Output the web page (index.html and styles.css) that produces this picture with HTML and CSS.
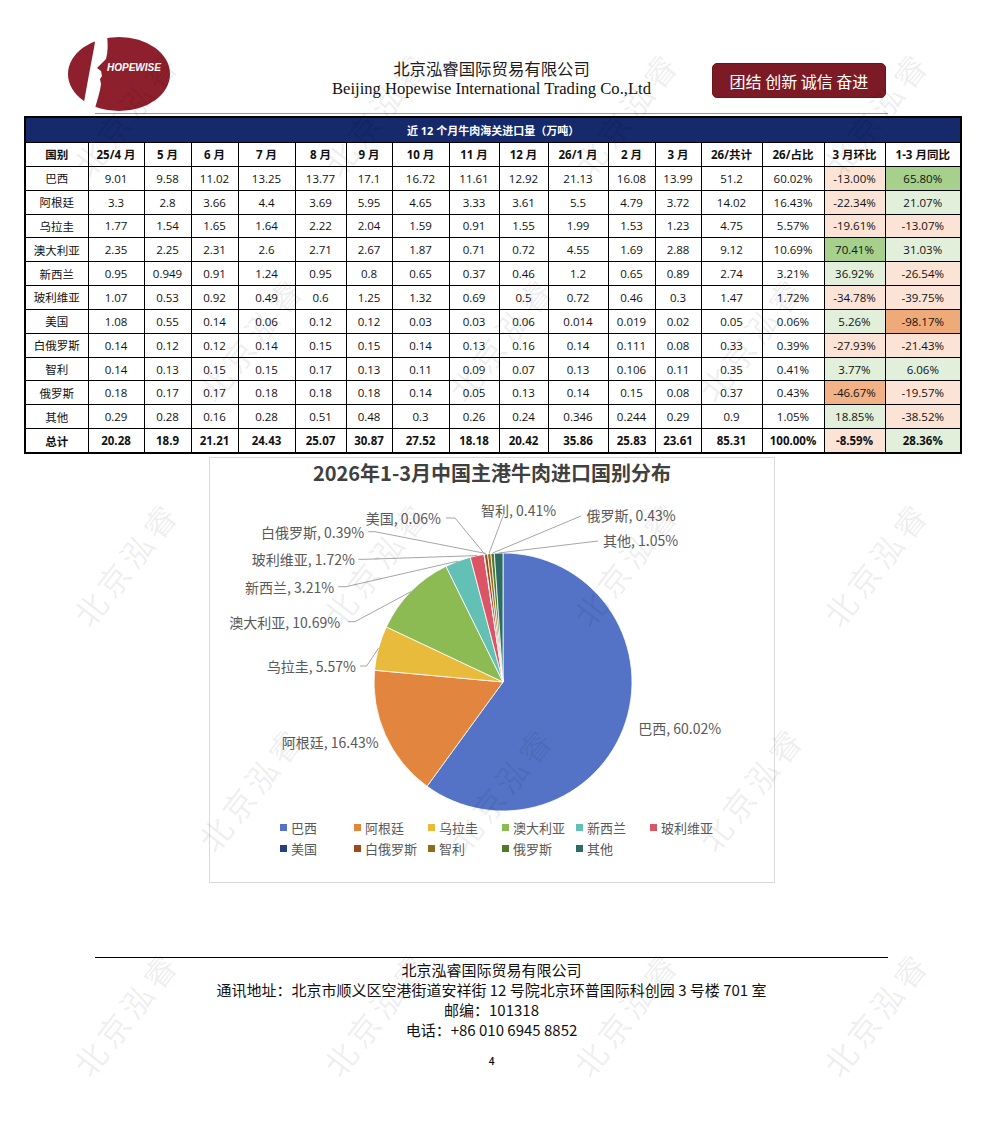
FILE: index.html
```html
<!DOCTYPE html>
<html lang="zh-CN">
<head>
<meta charset="utf-8">
<title>近12个月牛肉海关进口量</title>
<link rel="stylesheet" href="styles.css">
</head>
<body>
<div class="page">
  <header class="hdr">
    <div class="logo">
      <svg width="120" height="82" viewBox="0 0 120 82">
        <ellipse cx="57" cy="40" rx="51" ry="37" class="logo-red"/>
        <path class="logo-red" d="M58,4 L70,6 L61,9 Z"/>
        <path fill="#fff" d="M34,1 L45,1 C46,10 46,18 44,25 L35,34 L39,37 L40,42 L38,45 L39,50 C38,58 35,68 31,80 L20,80 C23,62 27,40 32,14 Z"/>
        <text x="45" y="37" class="logo-txt">HOPEWISE</text>
      </svg>
    </div>
    <div class="co">
      <div class="co-cn">北京泓睿国际贸易有限公司</div>
      <div class="co-en">Beijing Hopewise International Trading Co.,Ltd</div>
    </div>
    <div class="motto">团结 创新 诚信 奋进</div>
  </header>
  <div class="rule-top"></div>

  <table class="data">
    <colgroup>
      <col class="w63"><col class="w56"><col class="w47"><col class="w47"><col class="w57"><col class="w51"><col class="w46"><col class="w57"><col class="w50"><col class="w49"><col class="w60"><col class="w47"><col class="w46"><col class="w61"><col class="w62"><col class="w61"><col class="w76">
    </colgroup>
    <tr><td class="ttl" colspan="17">近 12 个月牛肉海关进口量（万吨）</td></tr>
    <tr class="hd"><th>国别</th><th>25/4 月</th><th>5 月</th><th>6 月</th><th>7 月</th><th>8 月</th><th>9 月</th><th>10 月</th><th>11 月</th><th>12 月</th><th>26/1 月</th><th>2 月</th><th>3 月</th><th>26/共计</th><th>26/占比</th><th>3 月环比</th><th>1-3 月同比</th></tr>
    <tr><td>巴西</td><td>9.01</td><td>9.58</td><td>11.02</td><td>13.25</td><td>13.77</td><td>17.1</td><td>16.72</td><td>11.61</td><td>12.92</td><td>21.13</td><td>16.08</td><td>13.99</td><td>51.2</td><td>60.02%</td><td class="neg">-13.00%</td><td class="hi">65.80%</td></tr>
    <tr><td>阿根廷</td><td>3.3</td><td>2.8</td><td>3.66</td><td>4.4</td><td>3.69</td><td>5.95</td><td>4.65</td><td>3.33</td><td>3.61</td><td>5.5</td><td>4.79</td><td>3.72</td><td>14.02</td><td>16.43%</td><td class="neg">-22.34%</td><td class="pos">21.07%</td></tr>
    <tr><td>乌拉圭</td><td>1.77</td><td>1.54</td><td>1.65</td><td>1.64</td><td>2.22</td><td>2.04</td><td>1.59</td><td>0.91</td><td>1.55</td><td>1.99</td><td>1.53</td><td>1.23</td><td>4.75</td><td>5.57%</td><td class="neg">-19.61%</td><td class="neg">-13.07%</td></tr>
    <tr><td>澳大利亚</td><td>2.35</td><td>2.25</td><td>2.31</td><td>2.6</td><td>2.71</td><td>2.67</td><td>1.87</td><td>0.71</td><td>0.72</td><td>4.55</td><td>1.69</td><td>2.88</td><td>9.12</td><td>10.69%</td><td class="hi">70.41%</td><td class="pos">31.03%</td></tr>
    <tr><td>新西兰</td><td>0.95</td><td>0.949</td><td>0.91</td><td>1.24</td><td>0.95</td><td>0.8</td><td>0.65</td><td>0.37</td><td>0.46</td><td>1.2</td><td>0.65</td><td>0.89</td><td>2.74</td><td>3.21%</td><td class="pos">36.92%</td><td class="neg">-26.54%</td></tr>
    <tr><td>玻利维亚</td><td>1.07</td><td>0.53</td><td>0.92</td><td>0.49</td><td>0.6</td><td>1.25</td><td>1.32</td><td>0.69</td><td>0.5</td><td>0.72</td><td>0.46</td><td>0.3</td><td>1.47</td><td>1.72%</td><td class="neg">-34.78%</td><td class="neg">-39.75%</td></tr>
    <tr><td>美国</td><td>1.08</td><td>0.55</td><td>0.14</td><td>0.06</td><td>0.12</td><td>0.12</td><td>0.03</td><td>0.03</td><td>0.06</td><td>0.014</td><td>0.019</td><td>0.02</td><td>0.05</td><td>0.06%</td><td class="pos">5.26%</td><td class="lo2">-98.17%</td></tr>
    <tr><td>白俄罗斯</td><td>0.14</td><td>0.12</td><td>0.12</td><td>0.14</td><td>0.15</td><td>0.15</td><td>0.14</td><td>0.13</td><td>0.16</td><td>0.14</td><td>0.111</td><td>0.08</td><td>0.33</td><td>0.39%</td><td class="neg">-27.93%</td><td class="neg">-21.43%</td></tr>
    <tr><td>智利</td><td>0.14</td><td>0.13</td><td>0.15</td><td>0.15</td><td>0.17</td><td>0.13</td><td>0.11</td><td>0.09</td><td>0.07</td><td>0.13</td><td>0.106</td><td>0.11</td><td>0.35</td><td>0.41%</td><td class="pos">3.77%</td><td class="pos">6.06%</td></tr>
    <tr><td>俄罗斯</td><td>0.18</td><td>0.17</td><td>0.17</td><td>0.18</td><td>0.18</td><td>0.18</td><td>0.14</td><td>0.05</td><td>0.13</td><td>0.14</td><td>0.15</td><td>0.08</td><td>0.37</td><td>0.43%</td><td class="lo">-46.67%</td><td class="neg">-19.57%</td></tr>
    <tr><td>其他</td><td>0.29</td><td>0.28</td><td>0.16</td><td>0.28</td><td>0.51</td><td>0.48</td><td>0.3</td><td>0.26</td><td>0.24</td><td>0.346</td><td>0.244</td><td>0.29</td><td>0.9</td><td>1.05%</td><td class="pos">18.85%</td><td class="neg">-38.52%</td></tr>
    <tr class="tot"><td>总计</td><td>20.28</td><td>18.9</td><td>21.21</td><td>24.43</td><td>25.07</td><td>30.87</td><td>27.52</td><td>18.18</td><td>20.42</td><td>35.86</td><td>25.83</td><td>23.61</td><td>85.31</td><td>100.00%</td><td class="neg">-8.59%</td><td class="pos">28.36%</td></tr>
  </table>

  <section class="chart">
    <div class="chart-title">2026年1-3月中国主港牛肉进口国别分布</div>
    <svg class="pie" width="564" height="326" viewBox="1 0 564 326">
      <g class="slices">
        <path class="s-br" d="M294,195 L294,66 A129,129 0 1 1 218.04,299.27 Z"/>
        <path class="s-ar" d="M294,195 L218.04,299.27 A129,129 0 0 1 165.54,183.26 Z"/>
        <path class="s-uy" d="M294,195 L165.54,183.26 A129,129 0 0 1 177.35,139.93 Z"/>
        <path class="s-au" d="M294,195 L177.35,139.93 A129,129 0 0 1 236.97,79.30 Z"/>
        <path class="s-nz" d="M294,195 L236.97,79.30 A129,129 0 0 1 261.29,70.22 Z"/>
        <path class="s-bo" d="M294,195 L261.29,70.22 A129,129 0 0 1 274.93,67.42 Z"/>
        <path class="s-us" d="M294,195 L274.93,67.42 A129,129 0 0 1 275.42,67.34 Z"/>
        <path class="s-by" d="M294,195 L275.42,67.34 A129,129 0 0 1 278.55,66.93 Z"/>
        <path class="s-cl" d="M294,195 L278.55,66.93 A129,129 0 0 1 281.86,66.57 Z"/>
        <path class="s-ru" d="M294,195 L281.86,66.57 A129,129 0 0 1 285.34,66.29 Z"/>
        <path class="s-ot" d="M294,195 L285.34,66.29 A129,129 0 0 1 294,66 Z"/>
      </g>
      <g class="leaders">
        <polyline points="151,179 157.7,179 169.5,161.1"/>
        <polyline points="139.3,134.7 146,134.7 202,104.6"/>
        <polyline points="129.3,99.7 137,99.7 248.9,74.1"/>
        <polyline points="149.3,72.3 156,72.3 268.1,68.6"/>
        <polyline points="159.3,44.7 166,44.7 277,66.5"/>
        <polyline points="237,31 246,31 275.2,66.5"/>
        <polyline points="294.4,28 280.2,66"/>
        <polyline points="372,29 283.6,66"/>
        <polyline points="389,54 289.6,66"/>
      </g>
      <g class="lbls">
        <text x="429.3" y="240.7">巴西, 60.02%</text>
        <text x="72.7" y="255.3">阿根廷, 16.43%</text>
        <text x="57.7" y="179">乌拉圭, 5.57%</text>
        <text x="20.3" y="134.7">澳大利亚, 10.69%</text>
        <text x="36" y="99.7">新西兰, 3.21%</text>
        <text x="42.7" y="72.3">玻利维亚, 1.72%</text>
        <text x="156.7" y="31">美国, 0.06%</text>
        <text x="52" y="44.7">白俄罗斯, 0.39%</text>
        <text x="272" y="23">智利, 0.41%</text>
        <text x="377.6" y="28">俄罗斯, 0.43%</text>
        <text x="394" y="53">其他, 1.05%</text>
      </g>
    </svg>
    <div class="legend">
      <div class="li"><span class="sw k-br"></span>巴西</div>
      <div class="li"><span class="sw k-ar"></span>阿根廷</div>
      <div class="li"><span class="sw k-uy"></span>乌拉圭</div>
      <div class="li"><span class="sw k-au"></span>澳大利亚</div>
      <div class="li"><span class="sw k-nz"></span>新西兰</div>
      <div class="li"><span class="sw k-bo"></span>玻利维亚</div>
      <div class="li"><span class="sw k-us"></span>美国</div>
      <div class="li"><span class="sw k-by"></span>白俄罗斯</div>
      <div class="li"><span class="sw k-cl"></span>智利</div>
      <div class="li"><span class="sw k-ru"></span>俄罗斯</div>
      <div class="li"><span class="sw k-ot"></span>其他</div>
    </div>
  </section>

  <footer class="foot">
    <div>北京泓睿国际贸易有限公司</div>
    <div>通讯地址：北京市顺义区空港街道安祥街 12 号院北京环普国际科创园 3 号楼 701 室</div>
    <div>邮编：101318</div>
    <div>电话：+86 010 6945 8852</div>
  </footer>
  <div class="pnum">4</div>

  <div class="wm" aria-hidden="true">
    <div class="wm-row"><span>北京泓睿</span><span>北京泓睿</span><span>北京泓睿</span><span>北京泓睿</span></div>
    <div class="wm-row odd"><span>北京泓睿</span><span>北京泓睿</span><span>北京泓睿</span></div>
    <div class="wm-row"><span>北京泓睿</span><span>北京泓睿</span><span>北京泓睿</span><span>北京泓睿</span></div>
    <div class="wm-row odd"><span>北京泓睿</span><span>北京泓睿</span><span>北京泓睿</span></div>
    <div class="wm-row"><span>北京泓睿</span><span>北京泓睿</span><span>北京泓睿</span><span>北京泓睿</span></div>
  </div>
</div>
</body>
</html>
```

FILE: styles.css
```css
html, body {
  margin: 0;
  padding: 0;
  background: #fff;
}

.page {
  position: relative;
  width: 983px;
  height: 1133px;
  overflow: hidden;
  font-family: "Noto Sans CJK SC", sans-serif;
  color: #000;
}

/* ---------- header ---------- */
.hdr {
  display: grid;
  grid-template-columns: 1fr auto 1fr;
  height: 113px;
}

.logo {
  margin: 34px 0 0 62px;
  width: 120px;
  height: 82px;
}

.logo svg { display: block; }

.logo-red { fill: #8e1f2c; }

.logo-txt {
  fill: #fff;
  font-family: "Liberation Sans", Arial, sans-serif;
  font-size: 10px;
  font-weight: 700;
  font-style: italic;
}

.co {
  margin-top: 57px;
  text-align: center;
}

.co-cn {
  font-family: "Noto Sans CJK SC", sans-serif;
  font-size: 16.4px;
  line-height: 22px;
  color: #1c1c1c;
}

.co-en {
  font-family: "Liberation Serif", "Times New Roman", serif;
  font-size: 16.6px;
  line-height: 20px;
  color: #111;
}

.motto {
  justify-self: end;
  margin: 63px 97px 0 0;
  width: 174px;
  height: 35px;
  box-sizing: border-box;
  background: #7c1b25;
  border: 1px solid #6a141d;
  border-radius: 5px;
  color: #fff;
  font-size: 16px;
  display: flex;
  align-items: center;
  justify-content: center;
}

.rule-top {
  margin: 0 95px;
  height: 1px;
  background: #9a9a9a;
}

/* ---------- table ---------- */
.data {
  margin: 2px 0 0 24px;
  width: 936px;
  border-collapse: collapse;
  table-layout: fixed;
  border: 2px solid #000;
  font-family: "Open Sans", "Noto Sans CJK SC", sans-serif;
  font-size: 11.5px;
  color: #111;
}

.w63 { width: 63px; }
.w56 { width: 56px; }
.w47 { width: 47px; }
.w57 { width: 57px; }
.w51 { width: 51px; }
.w46 { width: 46px; }
.w50 { width: 50px; }
.w49 { width: 49px; }
.w60 { width: 60px; }
.w61 { width: 61px; }
.w62 { width: 62px; }
.w76 { width: 76px; }

.data td,
.data th {
  border: 1px solid #000;
  height: 22.85px;
  padding: 0;
  text-align: center;
  white-space: nowrap;
}

.data .ttl {
  background: #15296b;
  color: #fff;
  font-weight: 700;
  font-size: 11px;
  height: 24px;
}

.data th { font-weight: 700; }
.data .tot td { font-weight: 700; }

.data .neg { background: #fbe3d6; }
.data .pos { background: #e2efda; }
.data .hi  { background: #a6d08b; }
.data .lo  { background: #f3b286; }
.data .lo2 { background: #efaa79; }

/* ---------- chart ---------- */
.chart {
  margin: 3px 0 0 209px;
  width: 566px;
  height: 426px;
  box-sizing: border-box;
  border: 1px solid #d9d9d9;
  padding-top: 1px;
}

.chart-title {
  text-align: center;
  font-size: 20px;
  line-height: 28px;
  font-weight: 700;
  color: #404040;
}

.pie { display: block; }

.slices path {
  stroke: #fff;
  stroke-width: 0.8;
  stroke-linejoin: round;
}

.leaders polyline {
  fill: none;
  stroke: #a6a6a6;
  stroke-width: 1;
}

.lbls text {
  font-family: "Noto Sans CJK SC", sans-serif;
  font-size: 14px;
  fill: #595959;
  dominant-baseline: central;
}

.s-br { fill: #5473c6; } .k-br { background: #5473c6; }
.s-ar { fill: #e1853f; } .k-ar { background: #e1853f; }
.s-uy { fill: #e9bb3d; } .k-uy { background: #e9bb3d; }
.s-au { fill: #8cbb53; } .k-au { background: #8cbb53; }
.s-nz { fill: #63c0b5; } .k-nz { background: #63c0b5; }
.s-bo { fill: #dc5567; } .k-bo { background: #dc5567; }
.s-us { fill: #24407e; } .k-us { background: #24407e; }
.s-by { fill: #9c4a1c; } .k-by { background: #9c4a1c; }
.s-cl { fill: #8e6c18; } .k-cl { background: #8e6c18; }
.s-ru { fill: #4e7b2c; } .k-ru { background: #4e7b2c; }
.s-ot { fill: #2c6c63; } .k-ot { background: #2c6c63; }

.legend {
  display: grid;
  grid-template-columns: repeat(6, 74px);
  padding: 4px 0 0 70px;
}

.li {
  display: flex;
  align-items: center;
  gap: 4px;
  font-size: 13px;
  line-height: 21px;
  color: #595959;
  white-space: nowrap;
}

.sw {
  width: 7px;
  height: 7px;
  flex: none;
}

/* ---------- footer ---------- */
.foot {
  margin: 74px 95px 0;
  border-top: 1px solid #000;
  padding-top: 2px;
  text-align: center;
  font-size: 15px;
  line-height: 20px;
  color: #111;
}

.pnum {
  margin-top: 11px;
  text-align: center;
  font-family: "Open Sans", sans-serif;
  font-size: 10px;
  font-weight: 600;
  line-height: 20px;
}

/* ---------- watermark ---------- */
.wm {
  position: absolute;
  top: 0;
  left: 0;
  right: 0;
  bottom: 0;
  pointer-events: none;
  z-index: 5;
}

.wm-row {
  display: flex;
  height: 225px;
}

.wm-row.odd { padding-left: 125px; }

.wm-row span {
  flex: none;
  width: 250px;
  display: flex;
  align-items: center;
  justify-content: center;
  transform: rotate(-52deg);
  font-family: "Noto Sans CJK SC", serif;
  font-size: 32px;
  letter-spacing: 5px;
  color: rgba(0, 0, 0, 0.075);
}
```
